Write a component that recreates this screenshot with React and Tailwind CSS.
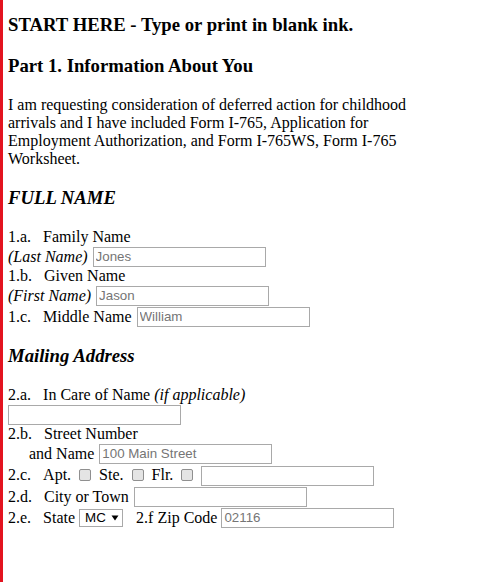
import React from "react";

const inputCls =
  "w-[173px] h-[20px] border border-[#a9a9a9] bg-white px-[2px] font-['Liberation_Sans'] text-[13.33px] leading-[normal] text-black placeholder:text-[#757575] outline-none";

const Field = ({ placeholder = "", className = "" }) => (
  <input type="text" placeholder={placeholder} className={`${inputCls} ${className}`} />
);

const Num = ({ children }) => <span className="mr-[12px]">{children}</span>;

const Box = () => (
  <span className="mx-[8px] w-[12px] h-[12px] rounded-[2px] border border-[#8f8f8f] bg-[#e4e4e4]" />
);

const App = () => {
  return (
    <div className="min-h-screen border-l-[3px] border-[#e3131f] pl-[5px] pt-[14px] font-['Liberation_Serif',serif] text-[16px] leading-[normal] text-black bg-white">
      <h1 className="text-[18.72px] font-bold">START HERE - Type or print in blank ink.</h1>
      <h2 className="mt-[19px] text-[18.72px] font-bold">Part 1. Information About You</h2>
      <p className="mt-[19px] max-w-[430px]">
        I am requesting consideration of deferred action for childhood arrivals and I have
        included Form I-765, Application for Employment Authorization, and Form I-765WS, Form
        I-765 Worksheet.
      </p>

      {/* Full name */}
      <h3 className="mt-[19px] text-[18.72px] font-bold italic">FULL NAME</h3>
      <div className="mt-[19px]">
        <Num>1.a.</Num>Family Name
      </div>
      <div className="flex h-[21px] items-center">
        <i>(Last Name)</i>
        <Field placeholder="Jones" className="ml-[5px]" />
      </div>
      <div>
        <Num>1.b.</Num>Given Name
      </div>
      <div className="flex h-[21px] items-center">
        <i>(First Name)</i>
        <Field placeholder="Jason" className="ml-[5px]" />
      </div>
      <div className="flex h-[21px] items-center">
        <Num>1.c.</Num>Middle Name
        <Field placeholder="William" className="ml-[5px]" />
      </div>

      {/* Mailing address */}
      <h3 className="mt-[18px] text-[18.72px] font-bold italic">Mailing Address</h3>
      <div className="mt-[19px]">
        <Num>2.a.</Num>In Care of Name <i>(if applicable)</i>
      </div>
      <div className="flex h-[21px] items-center">
        <Field />
      </div>
      <div>
        <Num>2.b.</Num>Street Number
      </div>
      <div className="flex h-[21px] items-center pl-[21px]">
        and Name
        <Field placeholder="100 Main Street" className="ml-[5px]" />
      </div>
      <div className="flex h-[22px] items-center">
        <Num>2.c.</Num>Apt.
        <Box />
        Ste.
        <Box />
        Flr.
        <Box />
        <Field className="self-end" />
      </div>
      <div className="flex h-[21px] items-center">
        <Num>2.d.</Num>City or Town
        <Field className="ml-[5px]" />
      </div>
      <div className="flex h-[21px] items-center">
        <Num>2.e.</Num>State
        <div className="ml-[4px] flex h-[18px] w-[44px] items-center border border-[#a9a9a9] bg-white pl-[5px] font-['Liberation_Sans'] text-[13.33px]">
          <span>MC</span>
          <svg width="8" height="6" viewBox="0 0 8 6" className="ml-[5px]">
            <path d="M0.5 0.5 L7.5 0.5 L4 5.5 Z" fill="#000" />
          </svg>
        </div>
        <span className="ml-[13px]">2.f Zip Code</span>
        <Field placeholder="02116" className="ml-[4px]" />
      </div>
    </div>
  );
};

export default App;
